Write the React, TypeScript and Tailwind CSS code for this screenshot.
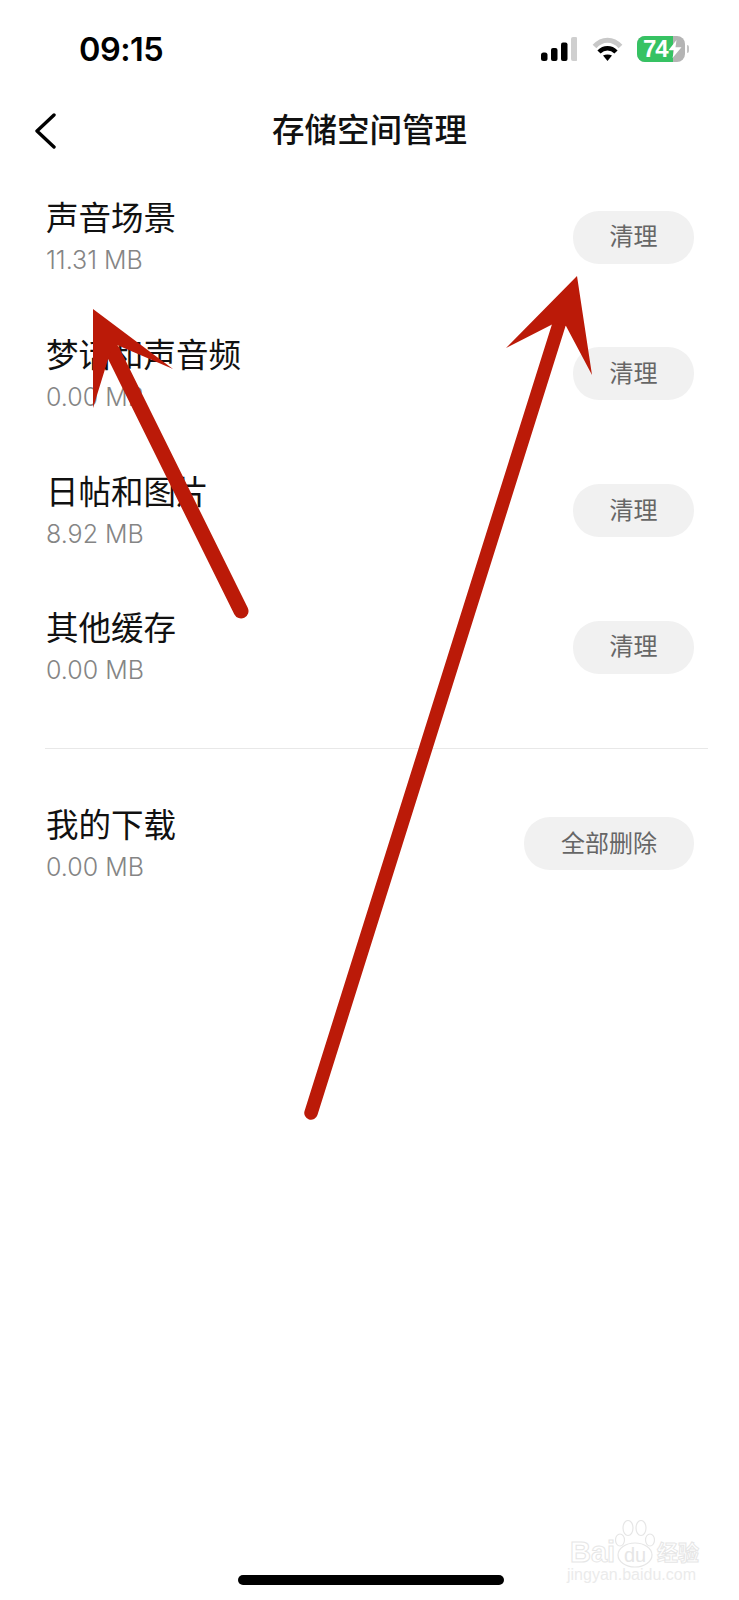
import React from 'react';

const cjk = "font-['Inter','Noto_Sans_CJK_SC',sans-serif]";

interface RowProps {
  title: string;
  size: string;
  action: string;
  wide?: boolean;
}

const Row: React.FC<RowProps> = ({ title, size, action, wide }) => {
  return (
    <div className="flex h-[136.67px] items-center justify-between pl-[46px] pr-[45px]">
      <div className="flex flex-col">
        <p className="text-[32.5px] leading-[40px] text-[#111111]">{title}</p>
        <p className="mt-[6px] font-['Inter',sans-serif] text-[25px] font-light leading-[30px] text-[#858585]">{size}</p>
      </div>
      <button className={`flex h-[53px] items-center justify-center rounded-[26px] bg-[#f1f1f1] text-[24px] text-[#666666] ${wide ? 'w-[170px]' : 'w-[121px]'}`}>
        {action}
      </button>
    </div>
  );
};

const StatusBar: React.FC = () => {
  return (
    <div className="mt-[36px] flex h-[26px] items-center justify-between pl-[79px] pr-[50px]">
      <span className="pt-[2px] font-['Inter',sans-serif] text-[32.5px] font-semibold leading-[36px] tracking-[-0.5px] text-black">09:15</span>
      <div className="flex items-center">
        <svg width="36" height="24" viewBox="0 0 36 24" className="mr-[15px]">
          <rect x="0" y="15.5" width="6.5" height="8.5" rx="2.5" fill="#000" />
          <rect x="10" y="11" width="6.5" height="13" rx="2" fill="#000" />
          <rect x="20" y="5.5" width="6.5" height="18.5" rx="2" fill="#000" />
          <rect x="30" y="0" width="6.5" height="24" rx="2" fill="#cfcfcf" />
        </svg>
        <svg width="31" height="24" viewBox="0 0 31 24" className="mr-[14px]">
          <path d="M2.5 9.5C10 1 21 1 28.5 9.5" fill="none" stroke="#c8c8c8" strokeWidth="5" />
          <path d="M7 15C12 10 19 10 24 15" fill="none" stroke="#000" strokeWidth="4.5" />
          <path d="M11 18.5C13.5 17 17.5 17 20 18.5L15.5 24Z" fill="#000" />
        </svg>
        <div className="relative flex h-[26px] w-[48px] overflow-hidden rounded-[8px] bg-[#b4b4b4]">
          <div className="flex h-full w-[36px] items-center bg-[#36c263] pl-[6px]">
            <span className="font-['Liberation_Sans',sans-serif] text-[24px] font-bold leading-none tracking-[-1px] text-white">74</span>
          </div>
          <svg width="14" height="18" viewBox="0 0 14 20" preserveAspectRatio="none" className="absolute left-[31px] top-[4px]">
            <path d="M8.5 0L0.5 11.5H6L4.5 20L13.5 8H7.5Z" fill="#fff" />
          </svg>
        </div>
        <div className="ml-[2px] h-[8px] w-[2px] rounded-r bg-[#c4c4c4]" />
      </div>
    </div>
  );
};

export default function App() {
  return (
    <div className={`relative h-[1600px] w-[739px] overflow-hidden bg-white ${cjk}`}>
      <StatusBar />

      <div className="mt-[49px] grid h-[40px] grid-cols-[1fr_auto_1fr] items-center pl-[34px]">
        <svg width="22" height="36" viewBox="0 0 22 36">
          <path d="M20 2L3 18L20 34" fill="none" stroke="#000" strokeWidth="3.4" strokeLinecap="round" strokeLinejoin="round" />
        </svg>
        <h1 className="-ml-[34px] text-[32.5px] font-medium leading-[40px] text-[#111111]">存储空间管理</h1>
        <div />
      </div>

      <div className="mt-[18px]">
        <Row title="声音场景" size="11.31 MB" action="清理" />
        <Row title="梦话和声音频" size="0.00 MB" action="清理" />
        <Row title="日帖和图片" size="8.92 MB" action="清理" />
        <Row title="其他缓存" size="0.00 MB" action="清理" />
      </div>

      <div className="ml-[45px] mr-[31px] mt-[32px] h-px bg-[#e8e8e8]" />

      <div className="mt-[27px]">
        <Row title="我的下载" size="0.00 MB" action="全部删除" wide />
      </div>

      {/* annotation arrows drawn over the screenshot */}
      <svg width="739" height="1600" viewBox="0 0 739 1600" className="pointer-events-none absolute left-0 top-0">
        <g fill="#bb1a08" stroke="#bb1a08" strokeLinecap="round">
          <line x1="112" y1="350" x2="241" y2="611" strokeWidth="15" />
          <polygon points="93,309 173,369 117,345 110,353 93,408" strokeWidth="0" />
          <line x1="561" y1="318" x2="311" y2="1113" strokeWidth="13.5" />
          <polygon points="577,276 592,375 566,326 555,323 506,348" strokeWidth="0" />
        </g>
      </svg>

      <div className="absolute left-[238px] top-[1575px] h-[10px] w-[266px] rounded-full bg-black" />

      {/* baidu watermark */}
      <div className="absolute left-[567px] top-[1520px] h-[62px] w-[134px]">
        <svg width="40" height="48" viewBox="0 0 40 48" className="absolute left-[48px] top-0" fill="none" stroke="#e6e6e6" strokeWidth="1.2">
          <ellipse cx="5" cy="20" rx="4.5" ry="6" />
          <ellipse cx="13" cy="8" rx="5" ry="7.5" />
          <ellipse cx="26" cy="8" rx="5" ry="7.5" />
          <ellipse cx="35" cy="20" rx="4.5" ry="6" />
          <ellipse cx="20" cy="35" rx="17" ry="12" />
        </svg>
        <span className="absolute left-[3px] top-[18px] font-['Liberation_Sans',sans-serif] text-[29px] font-bold leading-[28px] text-transparent [-webkit-text-stroke:1px_#e6e6e6]">Bai</span>
        <span className="absolute left-[57px] top-[24px] font-['Liberation_Sans',sans-serif] text-[20px] leading-[22px] text-[#e6e6e6]">du</span>
        <span className="absolute left-[90px] top-[20px] text-[21px] font-bold leading-[26px] text-transparent [-webkit-text-stroke:1px_#e6e6e6]">经验</span>
        <span className="absolute left-0 top-[47px] font-['Liberation_Sans',sans-serif] text-[16px] leading-[16px] text-[#ebebeb]">jingyan.baidu.com</span>
      </div>
    </div>
  );
}
